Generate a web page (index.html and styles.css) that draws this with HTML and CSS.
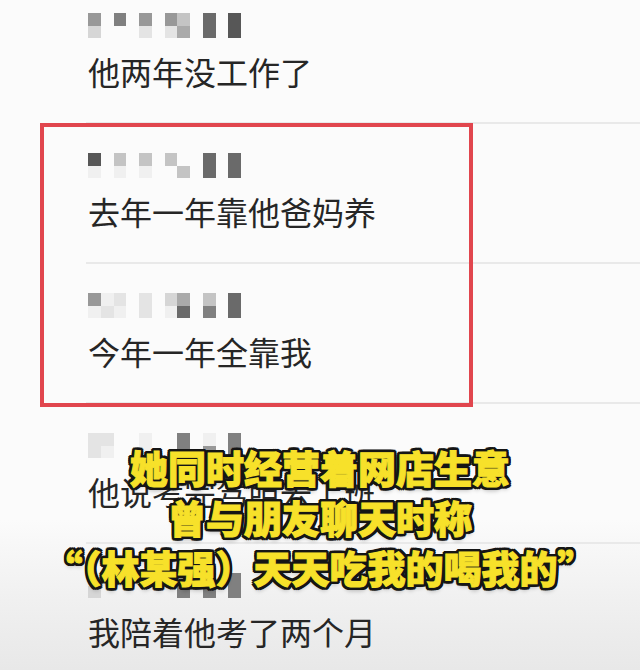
FILE: index.html
```html
<!DOCTYPE html>
<html lang="zh-CN">
<head>
    <meta charset="UTF-8">
    <meta name="viewport" content="width=device-width, initial-scale=1.0">
    <title>聊天记录</title>
    <link rel="stylesheet" href="styles.css">
</head>
<body>

<div class="screen">
    <div class="list">
        <div class="msg">
            <div class="mosaic">
                <i class="s6"></i><i class="s3"></i>
                <i></i><i></i>
                <i class="s7"></i><i></i>
                <i></i><i></i>
                <i class="s6"></i><i class="s2"></i>
                <i></i><i></i>
                <i class="s6"></i><i class="s2"></i>
                <i class="s4"></i><i class="s5"></i>
                <i></i><i></i>
                <i class="s8"></i><i class="s8"></i>
                <i></i><i></i>
                <i class="s9"></i><i class="s9"></i>
            </div>
            <p class="text">他两年没工作了</p>
        </div>

        <div class="msg">
            <div class="mosaic">
                <i class="s9"></i><i class="s1"></i>
                <i></i><i></i>
                <i class="s4"></i><i class="s1"></i>
                <i></i><i></i>
                <i class="s4"></i><i class="s1"></i>
                <i></i><i></i>
                <i class="s4"></i><i></i>
                <i></i><i class="s4"></i>
                <i></i><i></i>
                <i class="s8"></i><i class="s8"></i>
                <i></i><i></i>
                <i class="s8"></i><i class="s8"></i>
            </div>
            <p class="text">去年一年靠他爸妈养</p>
        </div>

        <div class="msg">
            <div class="mosaic">
                <i class="s6"></i><i class="s1"></i>
                <i class="s1"></i><i class="s2"></i>
                <i class="s2"></i><i class="s1"></i>
                <i></i><i></i>
                <i class="s2"></i><i class="s2"></i>
                <i></i><i></i>
                <i class="s3"></i><i class="s1"></i>
                <i class="s5"></i><i class="s8"></i>
                <i></i><i></i>
                <i class="s4"></i><i class="s7"></i>
                <i></i><i></i>
                <i class="s8"></i><i class="s8"></i>
            </div>
            <p class="text">今年一年全靠我</p>
        </div>

        <div class="msg">
            <div class="mosaic">
                <i class="s2"></i><i class="s2"></i>
                <i class="s2"></i><i class="s1"></i>
                <i></i><i></i>
                <i></i><i></i>
                <i class="s1"></i><i class="s1"></i>
                <i></i><i></i>
                <i></i><i></i>
                <i class="s7"></i><i class="s7"></i>
                <i></i><i></i>
                <i class="s1"></i><i class="s6"></i>
                <i></i><i></i>
                <i class="s7"></i><i class="s7"></i>
            </div>
            <p class="text">他说考完驾照去上班</p>
        </div>

        <div class="msg">
            <div class="mosaic">
                <i class="s1"></i><i class="s3"></i>
                <i></i><i></i>
                <i></i><i></i>
                <i></i><i></i>
                <i></i><i></i>
                <i></i><i></i>
                <i></i><i></i>
                <i class="s6"></i><i class="s7"></i>
                <i></i><i></i>
                <i class="s7"></i><i class="s7"></i>
                <i></i><i></i>
                <i class="s7"></i><i class="s7"></i>
            </div>
            <p class="text">我陪着他考了两个月</p>
        </div>
    </div>

    <!-- red annotation box over two messages -->
    <div class="highlight"></div>

    <div class="caption">
        <p>她同时经营着网店生意</p>
        <p>曾与朋友聊天时称</p>
        <p>“（林某强）天天吃我的喝我的”</p>
    </div>
</div>

</body>
</html>
```

FILE: styles.css
```css
body {
    margin: 0;
    font-family: "Noto Sans CJK SC", "Noto Sans", sans-serif;
    background: linear-gradient(to bottom, #fbfbfb 0, #fbfbfb 520px, #f0f0f0 600px, #e8e8e8 670px);
    height: 670px;
    overflow: hidden;
}
.screen {
    position: relative;
    display: flow-root;
    height: 670px;
}
.list {
    margin-top: -16px;
}
.msg {
    box-sizing: border-box;
    height: 140px;
    margin-left: 86px;
    padding: 29px 0 0 2px;
    border-bottom: 2px solid #e9e9e9;
}
.mosaic {
    display: grid;
    grid-auto-flow: column;
    grid-template-rows: 13px 12px;
    grid-auto-columns: 12.75px;
    height: 25px;
    filter: blur(0.7px);
}
.mosaic i {
    display: block;
}
.s1 { background: #f0f0f0; }
.s2 { background: #e4e4e4; }
.s3 { background: #d6d6d6; }
.s4 { background: #c4c4c4; }
.s5 { background: #aaaaaa; }
.s6 { background: #989898; }
.s7 { background: #808080; }
.s8 { background: #6a6a6a; }
.s9 { background: #575757; }
.text {
    margin: 13px 0 0;
    font-size: 32px;
    line-height: 40px;
    color: #262626;
}
.highlight {
    position: absolute;
    left: 40px;
    top: 123px;
    width: 433px;
    height: 284px;
    box-sizing: border-box;
    border: 4px solid #e1464e;
}
.caption {
    position: absolute;
    left: 0;
    right: 0;
    top: 442px;
    text-align: center;
    font-size: 38px;
    font-weight: 900;
    line-height: 50px;
    color: #f7e12a;
    -webkit-text-stroke: 1px #f7e12a;
    text-shadow:
        3px 0 0 #151515, -3px 0 0 #151515, 0 3px 0 #151515, 0 -3px 0 #151515,
        2px 2px 0 #151515, -2px 2px 0 #151515, 2px -2px 0 #151515, -2px -2px 0 #151515,
        3px 2px 0 #151515, -3px 2px 0 #151515, 3px -2px 0 #151515, -3px -2px 0 #151515,
        2px 3px 0 #151515, -2px 3px 0 #151515, 2px -3px 0 #151515, -2px -3px 0 #151515,
        0 4px 4px rgba(0, 0, 0, 0.25);
}
.caption p {
    margin: 0;
}
```
